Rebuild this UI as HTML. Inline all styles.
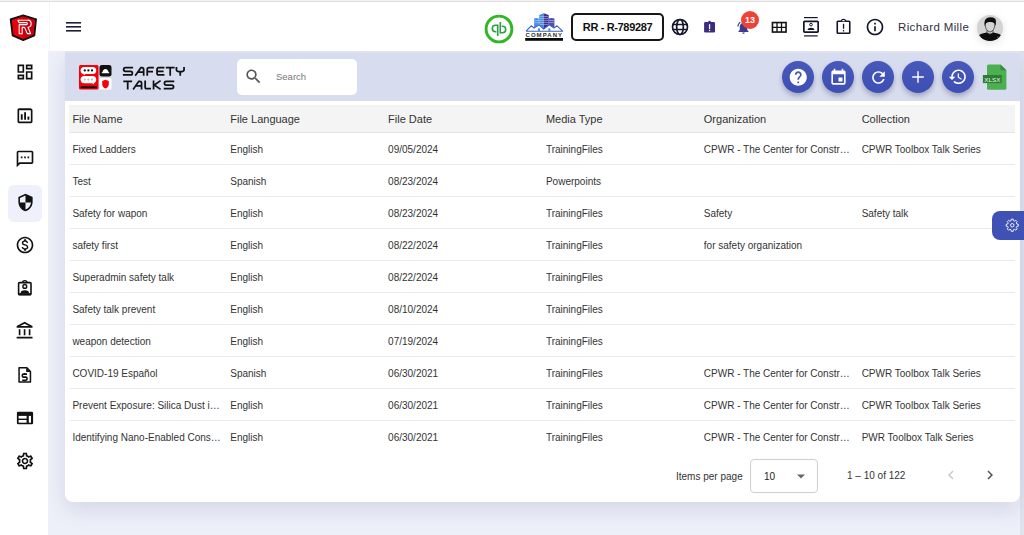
<!DOCTYPE html>
<html><head><meta charset="utf-8">
<style>
*{box-sizing:border-box;margin:0;padding:0}
html,body{width:1024px;height:535px;overflow:hidden;background:#fff;font-family:"Liberation Sans",sans-serif;color:#222}
.abs{position:absolute}
#topline{left:0;top:0;width:1024px;height:2px;background:linear-gradient(#f3f3f3 0,#f3f3f3 1px,#dfdfdf 1px)}
#side{left:0;top:2px;width:48px;height:533px;background:#fff}
#sideb{left:49px;top:2px;width:1px;height:49px;background:#f4f5f9}
#content{left:48px;top:51px;width:976px;height:484px;background:#eef0f9}
#card{left:65px;top:51px;width:955px;height:451px;background:#fff;border-radius:0 0 8px 8px;box-shadow:0 8px 22px rgba(50,60,120,.14)}
#chead{left:65px;top:51px;width:955px;height:50px;background:linear-gradient(#e3e6f1 0,#e0e4f1 1px,#d7dcef 2.5px)}
#rstrip{left:1020px;top:51px;width:4px;height:484px;background:#e1e4ef}
svg{display:block}
.ic{position:absolute}
.th{left:69px;top:105px;width:946px;height:28px;background:#f4f4f4;border-bottom:1px solid #e6e6e6}
.cell{position:absolute;white-space:nowrap;overflow:hidden;text-overflow:ellipsis;width:150px}
.h{font-size:11px;color:#333;top:113px}
.r{font-size:10px;color:#333}
.rl{position:absolute;left:69px;width:946px;height:1px;background:#ebebeb}
.fab{position:absolute;top:61px;width:32px;height:32px;border-radius:50%;background:linear-gradient(#4858bb,#3d4fb3);box-shadow:0 3px 5px rgba(0,0,40,.25)}
.fab svg{position:absolute}
</style></head><body>
<div id="topline" class="abs"></div>
<div id="content" class="abs"></div>
<div id="rstrip" class="abs"></div>
<div id="card" class="abs"></div>
<div id="chead" class="abs"></div>
<div id="side" class="abs"></div>
<div class="abs" style="left:50px;top:2px;width:974px;height:49px;background:#fff"></div>
<div id="sideb" class="abs"></div>

<!-- Logo shield -->
<svg class="ic" style="left:6px;top:10px" width="36" height="36" viewBox="0 0 36 36">
  <path d="M17.2 5 L30.3 9.1 L28.6 25.6 L17.2 30.3 L6.4 25.6 L4.4 9.1 Z" fill="#111" stroke="#111" stroke-width="1.3" stroke-linejoin="round"/>
  <path d="M17.2 6.6 L29 10.1 L27.4 24.8 L17.2 29 L7.5 24.8 L5.8 10.1 Z" fill="#ea000b"/>
  <path d="M17.2 6.6 L29 10.1 L27.4 24.8 L17.2 29 Z" fill="#c6000e"/>
  <path d="M11.9 10.2 H21.3 A3.5 3.5 0 0 1 22 17.2 L24.6 23.6 H21.3 L18.6 17.4 H16.2 V23.8 H13.2 V14.6 H20.8 A1.2 1.2 0 0 0 20.8 12.6 H13 Z" fill="none" stroke="#fff" stroke-width="1.1" stroke-linejoin="round"/>
</svg>

<!-- hamburger -->
<svg class="ic" style="left:65px;top:21px" width="17" height="12" viewBox="0 0 17 12">
  <rect x="1" y="1" width="15" height="1.6" fill="#1f1f3a"/>
  <rect x="1" y="5" width="15" height="1.6" fill="#1f1f3a"/>
  <rect x="1" y="9" width="15" height="1.6" fill="#1f1f3a"/>
</svg>

<!-- Sidebar icons -->
<div class="abs" style="left:8px;top:185px;width:33.5px;height:36.5px;border-radius:6px;background:#eef1fb"></div>
<svg class="ic" style="left:15px;top:62px" width="20" height="20" viewBox="0 0 24 24"><path fill="#111" d="M19 5v2h-4V5h4M9 5v6H5V5h4m10 8v6h-4v-6h4M9 17v2H5v-2h4M21 3h-8v6h8V3zM11 3H3v10h8V3zm10 8h-8v10h8V11zm-10 4H3v6h8v-6z"/></svg>
<svg class="ic" style="left:15px;top:106px" width="20" height="20" viewBox="0 0 24 24"><path fill="#111" d="M9.2 16.6H7V10h2.2v6.6zm4 0h-2.2V7.4h2.2v9.2zm4 0h-2.2V12.6h2.2v4zm2 2H5V5h14v14zm0-16H5c-1.1 0-2 .9-2 2v14c0 1.1.9 2 2 2h14c1.1 0 2-.9 2-2V5c0-1.1-.9-2-2-2z"/></svg>
<svg class="ic" style="left:15px;top:149px" width="20" height="20" viewBox="0 0 24 24"><path fill="#111" d="M20 2H4c-1.1 0-1.99.9-1.99 2L2 22l4-4h14c1.1 0 2-.9 2-2V4c0-1.1-.9-2-2-2zm0 14H5.17L4 17.17V4h16v12zM7 9h2v2H7zm4 0h2v2h-2zm4 0h2v2h-2z"/></svg>
<svg class="ic" style="left:15.5px;top:192.8px" width="19" height="19" viewBox="0 0 24 24"><path fill="#111" d="M12 1L3 5v6c0 5.55 3.84 10.74 9 12 5.16-1.26 9-6.45 9-12V5l-9-4zm0 10.99h7c-.53 4.12-3.28 7.79-7 8.94V12H5V6.3l7-3.11v8.8z"/></svg>
<svg class="ic" style="left:15px;top:235px" width="20" height="20" viewBox="0 0 24 24"><path fill="#111" d="M12 2C6.48 2 2 6.48 2 12s4.48 10 10 10 10-4.48 10-10S17.52 2 12 2zm0 18c-4.41 0-8-3.59-8-8s3.59-8 8-8 8 3.59 8 8-3.59 8-8 8zm.31-8.86c-1.77-.45-2.34-.94-2.34-1.67 0-.84.79-1.43 2.1-1.43 1.38 0 1.9.66 1.94 1.64h1.71c-.05-1.34-.87-2.57-2.490-2.97V5H10.9v1.690c-1.51.32-2.72 1.3-2.72 2.81 0 1.79 1.49 2.69 3.66 3.21 1.95.46 2.340 1.150 2.340 1.870 0 .53-.390 1.390-2.100 1.390-1.600 0-2.230-.72-2.320-1.640H8.040c.1 1.7 1.36 2.66 2.86 2.97V19h2.34v-1.67c1.52-.29 2.72-1.16 2.73-2.77-.01-2.2-1.9-2.96-3.66-3.42z"/></svg>
<svg class="ic" style="left:12px;top:275px" width="26" height="26" viewBox="0 0 26 26"><g fill="none" stroke="#111"><rect x="6.6" y="7.6" width="12.4" height="12" rx="0.8" stroke-width="1.6"/><path d="M10.6 7.6 Q10.6 5.6 12.8 5.6 Q15 5.6 15 7.6" stroke-width="1.4"/><circle cx="12.8" cy="11.4" r="1.9" stroke-width="1.4"/></g><path d="M8.4 18.6 Q8.7 15.3 12.8 15.3 Q16.9 15.3 17.2 18.6 Z" fill="#111"/><rect x="6.6" y="18.2" width="12.4" height="2" fill="#111"/></svg>
<svg class="ic" style="left:15px;top:321px" width="20" height="20" viewBox="0 0 24 24"><path fill="#111" d="M6.5 10h-2v7h2v-7zm6 0h-2v7h2v-7zm8.5 9H2v2h19v-2zm-2.5-9h-2v7h2v-7zm-7-6.74L16.71 6H6.290l5.21-2.74m0-2.26L2 6v2h19V6l-9.5-5z"/></svg>
<svg class="ic" style="left:12px;top:362px" width="26" height="26" viewBox="0 0 26 26"><path d="M7.05 5.65 H14.6 L18.45 9.5 V19.95 H7.05 Z" fill="none" stroke="#111" stroke-width="1.5" stroke-linejoin="round"/><path d="M14.2 5.65 L18.45 9.9 H14.2 Z" fill="#111"/><path d="M15 12.1 H11.5 Q10.3 12.1 10.3 13.3 V13.9 Q10.3 15.1 11.5 15.1 H13.8 Q15 15.1 15 16.3 V17 Q15 18.2 13.8 18.2 H10.2 M12.65 10.9 V12.1 M12.65 18.2 V19.2" fill="none" stroke="#111" stroke-width="1.6"/></svg>
<svg class="ic" style="left:12px;top:405px" width="26" height="26" viewBox="0 0 26 26"><rect x="4.9" y="6.8" width="16.2" height="12.4" rx="1.3" fill="#111"/><rect x="6.6" y="10.9" width="8" height="2.7" fill="#fff"/><rect x="6.6" y="15" width="8" height="2.7" fill="#fff"/><rect x="16.8" y="10.9" width="2.2" height="6.8" fill="#fff"/></svg>
<svg class="ic" style="left:15px;top:451px" width="20" height="20" viewBox="0 0 24 24"><path fill="#111" d="M19.43 12.98c.04-.32.07-.64.07-.98 0-.34-.03-.66-.07-.98l2.11-1.65c.19-.15.24-.42.12-.64l-2-3.46c-.09-.16-.26-.25-.44-.25-.06 0-.12.01-.17.03l-2.49 1c-.52-.4-1.08-.73-1.69-.98l-.38-2.65C14.46 2.18 14.25 2 14 2h-4c-.25 0-.46.18-.49.42l-.38 2.65c-.61.25-1.17.59-1.69.98l-2.49-1c-.06-.02-.12-.03-.18-.03-.17 0-.34.09-.43.25l-2 3.46c-.13.22-.07.49.12.64l2.11 1.65c-.04.32-.07.65-.07.98 0 .33.03.66.07.98l-2.11 1.65c-.19.15-.24.42-.12.64l2 3.46c.09.16.26.25.44.25.06 0 .12-.01.17-.03l2.49-1c.52.4 1.08.73 1.69.98l.38 2.65c.03.24.24.42.49.42h4c.25 0 .46-.18.49-.42l.38-2.650c.61-.25 1.17-.59 1.690-.98l2.49 1c.06.02.12.03.18.03.17 0 .34-.09.43-.25l2-3.46c.12-.22.07-.49-.12-.64l-2.11-1.65zm-1.98-1.71c.04.31.05.52.05.73 0 .21-.02.43-.05.73l-.14 1.13.89.7 1.08.84-.7 1.21-1.27-.51-1.04-.42-.9.68c-.43.32-.84.56-1.25.73l-1.06.43-.16 1.13-.2 1.35h-1.4l-.19-1.35-.16-1.13-1.06-.43c-.43-.18-.83-.41-1.23-.71l-.91-.7-1.06.43-1.27.51-.7-1.21 1.08-.84.89-.7-.14-1.13c-.03-.31-.05-.54-.05-.74s.02-.43.05-.73l.14-1.13-.89-.7-1.08-.84.7-1.21 1.27.51 1.04.42.9-.68c.43-.32.84-.56 1.25-.73l1.060-.43.16-1.13.2-1.35h1.39l.19 1.35.16 1.13 1.06.43c.43.18.83.41 1.23.71l.91.7 1.06-.43 1.27-.51.7 1.21-1.07.85-.89.7.14 1.13zM12 8c-2.21 0-4 1.79-4 4s1.79 4 4 4 4-1.79 4-4-1.790-4-4-4zm0 6c-1.1 0-2-.9-2-2s.9-2 2-2 2 .9 2 2-.9 2-2 2z"/></svg>

<!-- TOPBAR -->
<svg class="ic" style="left:483.8px;top:14px" width="30" height="30" viewBox="0 0 30 30">
  <circle cx="15" cy="15" r="12.9" fill="#fff" stroke="#30b723" stroke-width="2.9"/>
  <path d="M11.5 10.5a4 4 0 1 0 0 8h0.8v-1.6h-0.8a2.4 2.4 0 1 1 0-4.8h1.4v10h1.6v-11.6z" fill="#2b9f45"/>
  <path d="M18.5 19.5a4 4 0 1 0 0-8h-0.8v1.6h0.8a2.4 2.4 0 1 1 0 4.8h-1.4v-10h-1.6v11.6z" fill="#2b9f45"/>
</svg>
<svg class="ic" style="left:522px;top:10px" width="44" height="34" viewBox="0 0 44 34">
  <path d="M12.1 17 V8.6 L14.5 8 L16.8 8.6 V17z" fill="#4b8fe0"/>
  <path d="M17.2 17 V5 L21.7 3.2 V19z" fill="#4a8ce3"/>
  <path d="M21.7 3.2 L26.7 5 V17 L21.7 19z" fill="#3b2f8f"/>
  <path d="M26.7 17 V8.4 L29.5 7.9 L32.4 8.6 V17z" fill="#4f4fb0"/>
  <g stroke="#cfe3ff" stroke-width=".45"><path d="M17.5 6.5h8.8M17.5 8.5h8.8M17.5 10.5h8.8M17.5 12.5h8.8M17.5 14.5h8.8M12.3 10.5h4.3M12.3 12.5h4.3M26.9 10.5h5.3M26.9 12.5h5.3"/></g>
  <path d="M4.1 21.2 L9.2 15.8 L12 18 L17.2 14.9 L21.6 19 L27.3 14.9 L32 18 L35 15.8 L40.7 21.2z" fill="#fff"/>
  <path d="M4.1 21.2 L9.2 15.8 L12 18 L17.2 14.9 L21.6 19 L27.3 14.9 L32 18 L35 15.8 L40.7 21.2 H4.1" fill="none" stroke="#3d62c4" stroke-width="1.1" stroke-linejoin="round"/>
  <rect x="16" y="18.4" width="2" height="2.6" fill="#4a8ce3"/><rect x="26.3" y="18.4" width="2" height="2.6" fill="#4a8ce3"/>
  <text x="22.3" y="27.2" font-size="6" font-weight="bold" text-anchor="middle" font-family="Liberation Sans" fill="#2e2e2e" letter-spacing="1.05">COMPANY</text>
  <rect x="3.2" y="28" width="37.8" height="2.8" fill="#0a0a0a"/>
</svg>
<div class="abs" style="left:571px;top:13px;width:93px;height:28px;border:2px solid #161616;border-radius:5px;font-size:11px;font-weight:bold;line-height:25.5px;text-align:center;color:#111;letter-spacing:-.35px">RR - R-789287</div>
<svg class="ic" style="left:670px;top:17px" width="20" height="20" viewBox="0 0 24 24"><g fill="none" stroke="#14142b" stroke-width="2"><circle cx="12" cy="12" r="9"/><ellipse cx="12" cy="12" rx="4" ry="9"/><path d="M3 9h18M3 15h18"/></g></svg>
<svg class="ic" style="left:702px;top:19px" width="16" height="16" viewBox="0 0 16 16"><rect x="2.1" y="3" width="10.9" height="10.6" rx="1.3" fill="#3b2c7e"/><circle cx="7.55" cy="3" r="1.3" fill="#3b2c7e"/><rect x="6.95" y="5.2" width="1.2" height="5" fill="#fff"/><rect x="6.95" y="11" width="1.2" height="1.1" fill="#fff"/></svg>
<svg class="ic" style="left:735.5px;top:19.8px" width="15" height="15" viewBox="0 0 24 24"><path fill="#3b3a8e" d="M7.58 4.08L6.15 2.65C3.75 4.48 2.170 7.3 2.03 10.5h2c.15-2.65 1.51-4.97 3.55-6.42zm12.39 6.42h2c-.15-3.2-1.73-6.02-4.12-7.85l-1.42 1.43c2.02 1.45 3.39 3.77 3.54 6.42zM18 11c0-3.07-1.64-5.64-4.5-6.32V4c0-.83-.67-1.5-1.5-1.5s-1.5.67-1.5 1.5v.68C7.63 5.36 6 7.92 6 11v5l-2 2v1h16v-1l-2-2v-5zm-6 11c.14 0 .27-.01.4-.04.65-.14 1.18-.58 1.44-1.18.1-.24.15-.5.15-.78h-4c.01 1.1.9 2 2.01 2z"/></svg>
<div class="abs" style="left:741px;top:11px;width:18px;height:18px;border-radius:50%;background:#ef4135;color:#fff;font-size:9px;font-weight:bold;text-align:center;line-height:18px">13</div>
<svg class="ic" style="left:771px;top:21px" width="16" height="12" viewBox="0 0 16 12"><rect x="1.45" y="1.55" width="13.6" height="9.5" fill="none" stroke="#111" stroke-width="1.6"/><path d="M6 1.5v9.6M10.5 1.5v9.6M1.5 6.3h13.5" stroke="#111" stroke-width="1.3"/></svg>
<svg class="ic" style="left:802px;top:16px" width="18" height="22" viewBox="0 0 18 22"><rect x="2" y="1" width="13.7" height="1.2" fill="#14142b"/><rect x="2" y="19.3" width="13.7" height="1.2" fill="#14142b"/><rect x="1.85" y="5.35" width="14.3" height="10.7" rx="0.8" fill="none" stroke="#14142b" stroke-width="1.7"/><circle cx="9" cy="8.6" r="1.35" fill="none" stroke="#14142b" stroke-width="1"/><path d="M5.6 14.1 Q5.8 11.7 9 11.7 Q12.2 11.7 12.4 14.1 Z" fill="#14142b"/></svg>
<svg class="ic" style="left:834px;top:17px" width="18" height="18" viewBox="0 0 18 18"><rect x="3.25" y="4.25" width="12.5" height="12" rx="0.8" fill="none" stroke="#14142b" stroke-width="1.6"/><path d="M7.4 4.3 Q7.4 2.4 9.5 2.4 Q11.6 2.4 11.6 4.3" fill="#fff" stroke="#14142b" stroke-width="1.3"/><rect x="8.9" y="6.8" width="1.3" height="5" fill="#14142b"/><rect x="8.9" y="13.1" width="1.3" height="1.4" fill="#14142b"/></svg>
<svg class="ic" style="left:865px;top:17px" width="20" height="20" viewBox="0 0 24 24"><path fill="#14142b" d="M11 7h2v2h-2zm0 4h2v6h-2zm1-9C6.48 2 2 6.480 2 12s4.48 10 10 10 10-4.48 10-10S17.52 2 12 2zm0 18c-4.41 0-8-3.59-8-8s3.59-8 8-8 8 3.59 8 8-3.59 8-8 8z"/></svg>
<div class="abs" style="left:898px;top:19.5px;font-size:11.5px;color:#2e2e3e;letter-spacing:.36px;line-height:14px">Richard Mille</div>
<div class="abs" style="left:977px;top:15px;width:26px;height:26px;border-radius:50%;background:#d3d3d3;box-shadow:0 2px 8px rgba(0,0,0,.13);overflow:hidden">
  <svg width="26" height="26" viewBox="0 0 26 26"><path d="M0 22 Q3 18.6 9.5 17.6 L13 19.2 L16.5 17.6 Q23 18.6 26 22 V26 H0z" fill="#0d0d0d"/><path d="M10 15.2 V18 Q13 20 16 18 V15.2" fill="none" stroke="#333" stroke-width=".75"/><path d="M8.2 9 Q8.2 15.8 13 17 Q17.8 15.8 17.8 9" fill="none" stroke="#333" stroke-width=".75"/><path d="M7.7 11 Q6.3 3.6 11.5 2.4 Q17.5 1.4 18.8 5 Q19.3 8 18.4 11 Q17.6 6.6 13 7 Q9 6.6 7.7 11z" fill="#0d0d0d"/><rect x="20" y="21.5" width="1.6" height="1.6" fill="#444"/></svg>
</div>

<!-- CARD HEADER -->
<svg class="ic" style="left:78px;top:65px" width="34" height="25" viewBox="0 0 34 25">
  <rect x="1" y="0" width="19.5" height="24.5" rx="1.5" fill="#f6000a"/>
  <rect x="2.6" y="1.9" width="15.6" height="7.2" rx="3.6" fill="#fff"/>
  <path d="M5.3 8.5 L6 10.5 L7.8 8.5z" fill="#fff"/>
  <rect x="2.6" y="11" width="15.6" height="7.2" rx="3.6" fill="#fff"/>
  <path d="M14.5 17.5 L15 19.5 L16.7 17.5z" fill="#fff"/>
  <circle cx="6.8" cy="5.4" r="1.15" fill="#111"/><circle cx="10.4" cy="5.4" r="1.15" fill="#111"/><circle cx="14" cy="5.4" r="1.15" fill="#111"/>
  <circle cx="6.8" cy="14.6" r="1.1" fill="#bdbdbd"/><circle cx="10.4" cy="14.6" r="1.1" fill="#bdbdbd"/><circle cx="14" cy="14.6" r="1.1" fill="#bdbdbd"/>
  <rect x="2.5" y="21.2" width="16.5" height="2" rx="1" fill="#111"/>
  <rect x="21.5" y="0" width="12" height="11.6" rx="2.4" fill="#111"/>
  <path d="M23.8 8.3h7.4v-1h-.7c-.2-2-1.4-3.3-3-3.3s-2.8 1.3-3 3.3h-.7z" fill="#fff"/>
  <rect x="21.5" y="13" width="12" height="11.5" rx="1.5" fill="#fff"/>
  <path d="M27.5 14.8l3.3 1.3v2.8c0 2.3-1.5 4-3.3 4.7-1.8-.7-3.3-2.4-3.3-4.7V16.1z" fill="#f6000a"/>
</svg>
<svg class="ic" style="left:118px;top:62px" width="72" height="30" viewBox="0 0 72 30"><g fill="none" stroke="#111" stroke-width="1.75">
<path d="M15.1 5.65 H7.4 Q5.65 5.65 5.65 7.4 V7.6 Q5.65 9.3 7.4 9.3 H12.6 Q14.35 9.3 14.35 11.1 V11.2 Q14.35 12.95 12.6 12.95 H4.9"/>
<path d="M17.2 13.7 L22.9 5.65 H23.9 Q25.65 5.65 25.65 7.4 V13.7 M20 10.2 H25.65"/>
<path d="M29.25 13.7 V7.4 Q29.25 5.65 31 5.65 H35.9 M29.25 9.5 H35"/>
<path d="M46.4 5.65 H40.8 Q39.05 5.65 39.05 7.4 V11.2 Q39.05 12.95 40.8 12.95 H46.4 M39.05 9.3 H45.6"/>
<path d="M47.8 5.65 H56.6 M52.2 5.65 V13.7"/>
<path d="M58.45 4.9 V7.6 Q58.45 9.5 60.4 9.5 H64.1 Q66.05 9.5 66.05 7.6 V4.9 M62.25 9.5 V13.7"/>
<path d="M5.3 19.35 H14.1 M9.7 19.35 V27.4"/>
<path d="M15.1 27.4 L20.8 19.35 H21.8 Q23.55 19.35 23.55 21.1 V27.4 M17.9 23.9 H23.55"/>
<path d="M27.15 18.6 V24.9 Q27.15 26.65 28.9 26.65 H33"/>
<path d="M35.55 18.6 V27.4 M42.6 18.6 L36.3 23 L42.6 27.4"/>
<path d="M56.3 19.35 H48.2 Q46.45 19.35 46.45 21.1 V21.2 Q46.45 23 48.2 23 H53.8 Q55.55 23 55.55 24.8 Q55.55 26.65 53.8 26.65 H45.7"/>
</g></svg>

<div class="abs" style="left:237px;top:59px;width:120px;height:36px;background:#fff;border-radius:5px"></div>
<svg class="ic" style="left:244px;top:67px" width="19" height="19" viewBox="0 0 24 24"><path fill="#555" d="M15.5 14h-.79l-.28-.27C15.41 12.59 16 11.11 16 9.5 16 5.91 13.09 3 9.5 3S3 5.91 3 9.5 5.91 16 9.5 16c1.61 0 3.09-.59 4.23-1.57l.27.28v.79l5 4.99L20.49 19l-4.99-5zm-6 0C7.01 14 5 11.99 5 9.5S7.01 5 9.5 5 14 7.01 14 9.5 11.99 14 9.5 14z"/></svg>
<div class="abs" style="left:276px;top:71px;font-size:9.5px;color:#777;line-height:12px">Search</div>

<div class="fab" style="left:782px"><svg style="left:5.75px;top:5.75px" width="20.5" height="20.5" viewBox="0 0 24 24"><path fill="#fff" d="M12 2C6.48 2 2 6.48 2 12s4.48 10 10 10 10-4.48 10-10S17.52 2 12 2zm1 17h-2v-2h2v2zm2.07-7.75l-.9.92C13.45 12.9 13 13.5 13 15h-2v-.5c0-1.1.45-2.1 1.17-2.83l1.24-1.26c.37-.36.59-.86.59-1.41 0-1.1-.9-2-2-2s-2 .9-2 2H8c0-2.21 1.79-4 4-4s4 1.79 4 4c0 .88-.36 1.68-.93 2.25z"/></svg></div>
<div class="fab" style="left:822px"><svg style="left:6.5px;top:6.5px" width="19" height="19" viewBox="0 0 24 24"><path fill="#fff" d="M17 12h-5v5h5v-5zM16 1v2H8V1H6v2H5c-1.11 0-1.99.9-1.99 2L3 19c0 1.1.89 2 2 2h14c1.1 0 2-.9 2-2V5c0-1.1-.9-2-2-2h-1V1h-2zm3 18H5V8h14v11z"/></svg></div>
<div class="fab" style="left:862px"><svg style="left:6.5px;top:6.5px" width="19" height="19" viewBox="0 0 24 24"><path fill="#fff" d="M17.65 6.35C16.2 4.9 14.21 4 12 4c-4.42 0-7.99 3.58-7.99 8s3.57 8 7.99 8c3.73 0 6.84-2.55 7.73-6h-2.08c-.82 2.33-3.04 4-5.65 4-3.31 0-6-2.69-6-6s2.69-6 6-6c1.66 0 3.14.69 4.22 1.78L13 11h7V4l-2.35 2.35z"/></svg></div>
<div class="fab" style="left:902px"><svg style="left:7px;top:7px" width="18" height="18" viewBox="0 0 24 24"><path stroke="#fff" stroke-width="1.9" d="M12 4.3v15.4M4.3 12h15.4"/></svg></div>
<div class="fab" style="left:942px"><svg style="left:6.25px;top:6.25px" width="19.5" height="19.5" viewBox="0 0 24 24"><path fill="#fff" d="M13 3c-4.97 0-9 4.03-9 9H1l3.89 3.89.07.14L9 12H6c0-3.87 3.13-7 7-7s7 3.13 7 7-3.13 7-7 7c-1.93 0-3.68-.79-4.94-2.06l-1.42 1.42C8.27 19.99 10.51 21 13 21c4.97 0 9-4.03 9-9s-4.03-9-9-9zm-1 5v5l4.28 2.54.72-1.21-3.5-2.08V8H12z"/></svg></div>
<svg class="ic" style="left:981px;top:63px" width="27" height="28" viewBox="0 0 27 28">
  <path d="M7.5 1.4 H19.5 L25.4 7.3 V25.3 Q25.4 26.8 23.9 26.8 H7.5 Q6 26.8 6 25.3 V2.9 Q6 1.4 7.5 1.4Z" fill="#4caf50"/>
  <path d="M19.5 1.4 V7.3 H25.4z" fill="#378e3b"/>
  <rect x="1.9" y="12" width="18.8" height="8.1" fill="#2e7d32"/>
  <text x="11.4" y="18.5" font-size="6.2" text-anchor="middle" font-family="Liberation Sans" fill="#f1f8f1" letter-spacing=".15">XLSX</text>
</svg>

<!-- TABLE -->
<div class="abs th"></div>
<div id="rows"></div>
<div class="cell h" style="left:72.40px">File Name</div>
<div class="cell h" style="left:230.25px">File Language</div>
<div class="cell h" style="left:388.10px">File Date</div>
<div class="cell h" style="left:545.95px">Media Type</div>
<div class="cell h" style="left:703.80px">Organization</div>
<div class="cell h" style="left:861.65px">Collection</div>

<!-- rows inserted -->
<div class="cell r" style="left:72.40px;top:144px;line-height:12px">Fixed Ladders</div>
<div class="cell r" style="left:230.25px;top:144px;line-height:12px">English</div>
<div class="cell r" style="left:388.10px;top:144px;line-height:12px">09/05/2024</div>
<div class="cell r" style="left:545.95px;top:144px;line-height:12px">TrainingFiles</div>
<div class="cell r" style="left:703.80px;top:144px;line-height:12px">CPWR - The Center for Construction Research and Training</div>
<div class="cell r" style="left:861.65px;top:144px;line-height:12px">CPWR Toolbox Talk Series</div>
<div class="rl" style="top:164px"></div>
<div class="cell r" style="left:72.40px;top:176px;line-height:12px">Test</div>
<div class="cell r" style="left:230.25px;top:176px;line-height:12px">Spanish</div>
<div class="cell r" style="left:388.10px;top:176px;line-height:12px">08/23/2024</div>
<div class="cell r" style="left:545.95px;top:176px;line-height:12px">Powerpoints</div>
<div class="rl" style="top:196px"></div>
<div class="cell r" style="left:72.40px;top:208px;line-height:12px">Safety for wapon</div>
<div class="cell r" style="left:230.25px;top:208px;line-height:12px">English</div>
<div class="cell r" style="left:388.10px;top:208px;line-height:12px">08/23/2024</div>
<div class="cell r" style="left:545.95px;top:208px;line-height:12px">TrainingFiles</div>
<div class="cell r" style="left:703.80px;top:208px;line-height:12px">Safety</div>
<div class="cell r" style="left:861.65px;top:208px;line-height:12px">Safety talk</div>
<div class="rl" style="top:228px"></div>
<div class="cell r" style="left:72.40px;top:240px;line-height:12px">safety first</div>
<div class="cell r" style="left:230.25px;top:240px;line-height:12px">English</div>
<div class="cell r" style="left:388.10px;top:240px;line-height:12px">08/22/2024</div>
<div class="cell r" style="left:545.95px;top:240px;line-height:12px">TrainingFiles</div>
<div class="cell r" style="left:703.80px;top:240px;line-height:12px">for safety organization</div>
<div class="rl" style="top:260px"></div>
<div class="cell r" style="left:72.40px;top:272px;line-height:12px">Superadmin safety talk</div>
<div class="cell r" style="left:230.25px;top:272px;line-height:12px">English</div>
<div class="cell r" style="left:388.10px;top:272px;line-height:12px">08/22/2024</div>
<div class="cell r" style="left:545.95px;top:272px;line-height:12px">TrainingFiles</div>
<div class="rl" style="top:292px"></div>
<div class="cell r" style="left:72.40px;top:304px;line-height:12px">Safety talk prevent</div>
<div class="cell r" style="left:230.25px;top:304px;line-height:12px">English</div>
<div class="cell r" style="left:388.10px;top:304px;line-height:12px">08/10/2024</div>
<div class="cell r" style="left:545.95px;top:304px;line-height:12px">TrainingFiles</div>
<div class="rl" style="top:324px"></div>
<div class="cell r" style="left:72.40px;top:336px;line-height:12px">weapon detection</div>
<div class="cell r" style="left:230.25px;top:336px;line-height:12px">English</div>
<div class="cell r" style="left:388.10px;top:336px;line-height:12px">07/19/2024</div>
<div class="cell r" style="left:545.95px;top:336px;line-height:12px">TrainingFiles</div>
<div class="rl" style="top:356px"></div>
<div class="cell r" style="left:72.40px;top:368px;line-height:12px">COVID-19 Español</div>
<div class="cell r" style="left:230.25px;top:368px;line-height:12px">Spanish</div>
<div class="cell r" style="left:388.10px;top:368px;line-height:12px">06/30/2021</div>
<div class="cell r" style="left:545.95px;top:368px;line-height:12px">TrainingFiles</div>
<div class="cell r" style="left:703.80px;top:368px;line-height:12px">CPWR - The Center for Construction Research and Training</div>
<div class="cell r" style="left:861.65px;top:368px;line-height:12px">CPWR Toolbox Talk Series</div>
<div class="rl" style="top:388px"></div>
<div class="cell r" style="left:72.40px;top:400px;line-height:12px">Prevent Exposure: Silica Dust in Construction</div>
<div class="cell r" style="left:230.25px;top:400px;line-height:12px">English</div>
<div class="cell r" style="left:388.10px;top:400px;line-height:12px">06/30/2021</div>
<div class="cell r" style="left:545.95px;top:400px;line-height:12px">TrainingFiles</div>
<div class="cell r" style="left:703.80px;top:400px;line-height:12px">CPWR - The Center for Construction Research and Training</div>
<div class="cell r" style="left:861.65px;top:400px;line-height:12px">CPWR Toolbox Talk Series</div>
<div class="rl" style="top:420px"></div>
<div class="cell r" style="left:72.40px;top:432px;line-height:12px">Identifying Nano-Enabled Construction Products</div>
<div class="cell r" style="left:230.25px;top:432px;line-height:12px">English</div>
<div class="cell r" style="left:388.10px;top:432px;line-height:12px">06/30/2021</div>
<div class="cell r" style="left:545.95px;top:432px;line-height:12px">TrainingFiles</div>
<div class="cell r" style="left:703.80px;top:432px;line-height:12px">CPWR - The Center for Construction Research and Training</div>
<div class="cell r" style="left:861.65px;top:432px;line-height:12px">PWR Toolbox Talk Series</div>

<!-- pagination -->
<div class="abs" style="left:676px;top:470px;font-size:10px;color:#333;line-height:13px">Items per page</div>
<div class="abs" style="left:750px;top:459px;width:68px;height:34px;border:1px solid #cfcfcf;border-radius:4px"></div>
<div class="abs" style="left:764px;top:470px;font-size:10px;color:#222;line-height:13px">10</div>
<svg class="ic" style="left:796px;top:474px" width="10" height="5" viewBox="0 0 10 5"><path d="M1 0.5h8L5 4.5z" fill="#666"/></svg>
<div class="abs" style="left:847px;top:469px;font-size:10px;color:#333;line-height:13px">1 – 10 of 122</div>
<svg class="ic" style="left:942px;top:466px" width="18" height="18" viewBox="0 0 24 24"><path fill="#c8c8c8" d="M15.41 7.41L14 6l-6 6 6 6 1.41-1.41L10.83 12z"/></svg>
<svg class="ic" style="left:981px;top:466px" width="18" height="18" viewBox="0 0 24 24"><path fill="#555" d="M10 6L8.59 7.41 13.17 12l-4.58 4.59L10 18l6-6z"/></svg>

<!-- settings tab -->
<div class="abs" style="left:992px;top:211px;width:34px;height:29px;background:#3f51b5;border-radius:8px 0 0 8px"></div>
<svg class="ic" style="left:1004.65px;top:217.55px" width="14.5" height="14.5" viewBox="0 0 24 24"><path d="M22.07 10.40 L22.07 13.60 L19.55 13.94 L18.71 15.97 L20.25 18.00 L18.00 20.25 L15.97 18.71 L13.94 19.55 L13.60 22.07 L10.40 22.07 L10.06 19.55 L8.03 18.71 L6.00 20.25 L3.75 18.00 L5.29 15.97 L4.45 13.94 L1.93 13.60 L1.93 10.40 L4.45 10.06 L5.29 8.03 L3.75 6.00 L6.00 3.75 L8.03 5.29 L10.06 4.45 L10.40 1.93 L13.60 1.93 L13.94 4.45 L15.97 5.29 L18.00 3.75 L20.25 6.00 L18.71 8.03 L19.55 10.06Z" fill="none" stroke="#fff" stroke-width="1.5" stroke-linejoin="round"/><circle cx="12" cy="12" r="2.8" fill="none" stroke="#fff" stroke-width="1.5"/></svg>

</body></html>
